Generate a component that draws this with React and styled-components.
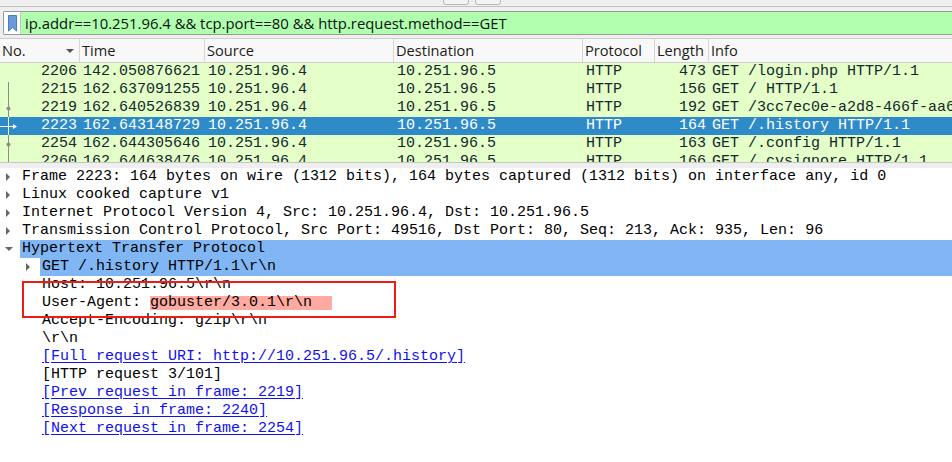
import React from 'react'
import styled, {createGlobalStyle} from 'styled-components'

const GlobalStyle = createGlobalStyle`
    html, body {margin: 0; padding: 0; background: #efefef;}
    body {width: 952px; height: 462px; overflow: hidden;}
`;

const COLS = '80px 125px 189px 189px 72px 54px 1fr';

const packets = [
    {no: 2206, time: '142.050876621', src: '10.251.96.4', dst: '10.251.96.5', proto: 'HTTP', len: 473, info: 'GET /login.php HTTP/1.1'},
    {no: 2215, time: '162.637091255', src: '10.251.96.4', dst: '10.251.96.5', proto: 'HTTP', len: 156, info: 'GET / HTTP/1.1'},
    {no: 2219, time: '162.640526839', src: '10.251.96.4', dst: '10.251.96.5', proto: 'HTTP', len: 192, info: 'GET /3cc7ec0e-a2d8-466f-aa6'},
    {no: 2223, time: '162.643148729', src: '10.251.96.4', dst: '10.251.96.5', proto: 'HTTP', len: 164, info: 'GET /.history HTTP/1.1', selected: true},
    {no: 2254, time: '162.644305646', src: '10.251.96.4', dst: '10.251.96.5', proto: 'HTTP', len: 163, info: 'GET /.config HTTP/1.1'},
    {no: 2260, time: '162.644638476', src: '10.251.96.4', dst: '10.251.96.5', proto: 'HTTP', len: 166, info: 'GET /.cvsignore HTTP/1.1'},
];

const details = [
    {level: 0, arrow: 'closed', text: 'Frame 2223: 164 bytes on wire (1312 bits), 164 bytes captured (1312 bits) on interface any, id 0'},
    {level: 0, arrow: 'closed', text: 'Linux cooked capture v1'},
    {level: 0, arrow: 'closed', text: 'Internet Protocol Version 4, Src: 10.251.96.4, Dst: 10.251.96.5'},
    {level: 0, arrow: 'closed', text: 'Transmission Control Protocol, Src Port: 49516, Dst Port: 80, Seq: 213, Ack: 935, Len: 96'},
    {level: 0, arrow: 'open', text: 'Hypertext Transfer Protocol', hl: true},
    {level: 1, arrow: 'closed', text: 'GET /.history HTTP/1.1\\r\\n', hl: true},
    {level: 1, text: 'Host: 10.251.96.5\\r\\n'},
    {level: 1, text: 'User-Agent: ', mark: 'gobuster/3.0.1\\r\\n'},
    {level: 1, text: 'Accept-Encoding: gzip\\r\\n'},
    {level: 1, text: '\\r\\n'},
    {level: 1, text: '[Full request URI: http://10.251.96.5/.history]', link: true},
    {level: 1, text: '[HTTP request 3/101]'},
    {level: 1, text: '[Prev request in frame: 2219]', link: true},
    {level: 1, text: '[Response in frame: 2240]', link: true},
    {level: 1, text: '[Next request in frame: 2254]', link: true},
];

const App = () => {
    return (
        <Window>
            <GlobalStyle/>
            <Toolbar>
                <ToolButton/>
                <ToolButton/>
            </Toolbar>
            <FilterWrap>
                <FilterBox>
                    <Bookmark>
                        <svg width="9" height="17" viewBox="0 0 9 17">
                            <path d="M0.5 0.5 H8.5 V16 L4.5 12.5 L0.5 16 Z" fill="#6b9bd6" stroke="#4a7cbf"/>
                        </svg>
                    </Bookmark>
                    <FilterInput>ip.addr==10.251.96.4 &amp;&amp; tcp.port==80 &amp;&amp; http.request.method==GET</FilterInput>
                </FilterBox>
            </FilterWrap>
            <Header>
                <HeadCell>No.<SortArrow/></HeadCell>
                <HeadCell>Time</HeadCell>
                <HeadCell>Source</HeadCell>
                <HeadCell>Destination</HeadCell>
                <HeadCell>Protocol</HeadCell>
                <HeadCell>Length</HeadCell>
                <HeadCell last>Info</HeadCell>
            </Header>
            <PacketList>
                {packets.map(p => (
                    <PacketRow key={p.no} selected={p.selected}>
                        <Cell right>{p.no}</Cell>
                        <Cell>{p.time}</Cell>
                        <Cell>{p.src}</Cell>
                        <Cell>{p.dst}</Cell>
                        <Cell>{p.proto}</Cell>
                        <Cell right>{p.len}</Cell>
                        <Cell>{p.info}</Cell>
                    </PacketRow>
                ))}
                <Related width="20" height="100" viewBox="0 0 20 100">
                    <line x1="8.5" y1="19" x2="8.5" y2="54" stroke="#8c8c8c"/>
                    <line x1="8.5" y1="72" x2="8.5" y2="100" stroke="#8c8c8c"/>
                    <circle cx="8.5" cy="45.5" r="2" fill="#8c8c8c"/>
                    <circle cx="8.5" cy="81.5" r="2" fill="#8c8c8c"/>
                    <line x1="8.5" y1="54" x2="8.5" y2="72" stroke="#fff"/>
                    <line x1="0" y1="63.5" x2="15" y2="63.5" stroke="#fff"/>
                    <path d="M13 61 L17 63.5 L13 66 Z" fill="#fff"/>
                </Related>
            </PacketList>
            <Splitter/>
            <Details>
                {details.map((d, i) => (
                    <TreeRow key={i}>
                        <Indent level={d.level}/>
                        <Expander>{d.arrow && <TreeArrow open={d.arrow === 'open'}/>}</Expander>
                        <TreeText hl={d.hl} link={d.link}>
                            {d.text}
                            {d.mark && <Marked>{d.mark}</Marked>}
                        </TreeText>
                    </TreeRow>
                ))}
                <Callout/>
            </Details>
        </Window>
    )
};

const Window = styled.div`
    width: 952px;
    height: 462px;
    display: flex;
    flex-direction: column;
    background: #efefef;
    overflow: hidden;
`;

const Toolbar = styled.div`
    height: 6px;
    display: flex;
    gap: 6px;
    padding-left: 443px;
    border-bottom: 1px solid #c4c4c4;
    overflow: hidden;
    box-sizing: content-box;
`;

const ToolButton = styled.div`
    width: 24px;
    height: 24px;
    margin-top: -21px;
    border: 1px solid #b8b8b8;
    border-radius: 3px;
    background: #f4f4f4;
`;

const FilterWrap = styled.div`
    padding: 4px 0 2px 3px;
`;

const FilterBox = styled.div`
    display: flex;
    height: 22px;
    border: 1px solid #9a9a9a;
    border-right: none;
    border-radius: 2px 0 0 2px;
    background: #afffaf;
`;

const Bookmark = styled.div`
    width: 16px;
    display: flex;
    align-items: center;
    justify-content: center;
    background: #fff;
    border-right: 1px solid #c8c8c8;
    svg {display: block;}
`;

const FilterInput = styled.div`
    padding-left: 4px;
    font-family: "Open Sans", sans-serif;
    font-size: 14.85px;
    line-height: 22px;
    color: #101010;
    white-space: nowrap;
`;

const Header = styled.div`
    display: grid;
    grid-template-columns: ${COLS};
    height: 23px;
    margin-top: 1px;
    background: #f8f8f8;
    border-top: 1px solid #cfcfcf;
    border-bottom: 1px solid #cfcfcf;
`;

const HeadCell = styled.div`
    position: relative;
    padding-left: 2px;
    font-family: "Open Sans", sans-serif;
    font-size: 14.6px;
    line-height: 23px;
    color: #1c1c1c;
    white-space: nowrap;
    overflow: hidden;
    border-right: ${props => props.last ? 'none' : '1px solid #d6d6d6'};
`;

const SortArrow = styled.span`
    position: absolute;
    left: 66px;
    top: 10px;
    border-left: 4px solid transparent;
    border-right: 4px solid transparent;
    border-top: 4px solid #555;
`;

const PacketList = styled.div`
    position: relative;
    height: 99px;
    overflow: hidden;
    background: #fff;
    border-bottom: 1px solid #c6c6c6;
`;

const PacketRow = styled.div`
    display: grid;
    grid-template-columns: ${COLS};
    height: 18px;
    background: ${props => props.selected ? '#2f8bc8' : '#e4ffc7'};
    color: ${props => props.selected ? '#ffffff' : '#12272e'};
    font-family: "Liberation Mono", "DejaVu Sans Mono", monospace;
    font-size: 15px;
    line-height: 18px;
`;

const Cell = styled.div`
    padding: 0 ${props => props.right ? '3px' : '0'} 0 ${props => props.right ? '0' : '3px'};
    text-align: ${props => props.right ? 'right' : 'left'};
    white-space: nowrap;
    overflow: hidden;
`;

const Related = styled.svg`
    position: absolute;
    left: 0;
    top: 0;
`;

const Splitter = styled.div`
    height: 5px;
    background: #efefef;
`;

const Details = styled.div`
    position: relative;
    flex: 1;
    background: #fff;
    font-family: "Liberation Mono", "DejaVu Sans Mono", monospace;
    font-size: 15px;
    line-height: 18px;
    color: #000;
`;

const TreeRow = styled.div`
    display: flex;
    height: 18px;
    white-space: nowrap;
`;

const Indent = styled.div`
    width: ${props => props.level * 20}px;
    flex: none;
`;

const Expander = styled.div`
    width: 20px;
    flex: none;
    display: flex;
    align-items: center;
    justify-content: center;
`;

const TreeArrow = styled.span`
    width: 0;
    height: 0;
    ${props => props.open ? `
        border-left: 4px solid transparent;
        border-right: 4px solid transparent;
        border-top: 4px solid #666;
        margin-left: -2px;
    ` : `
        border-top: 4px solid transparent;
        border-bottom: 4px solid transparent;
        border-left: 4px solid #666;
        margin-left: -4px;
    `}
`;

const TreeText = styled.div`
    flex: 1;
    padding-left: 2px;
    background: ${props => props.hl ? '#80b6f4' : 'transparent'};
    color: ${props => props.link ? '#1010f0' : '#000'};
    text-decoration: ${props => props.link ? 'underline' : 'none'};
    text-underline-offset: 2px;
`;

const Marked = styled.span`
    display: inline-block;
    padding-right: 20px;
    background: linear-gradient(to bottom, transparent 2px, #ffaaa0 2px, #ffaaa0 16px, transparent 16px);
`;

const Callout = styled.div`
    position: absolute;
    left: 22px;
    top: 113px;
    width: 370px;
    height: 33px;
    border: 2px solid #ee1c12;
    pointer-events: none;
`;

export default App
